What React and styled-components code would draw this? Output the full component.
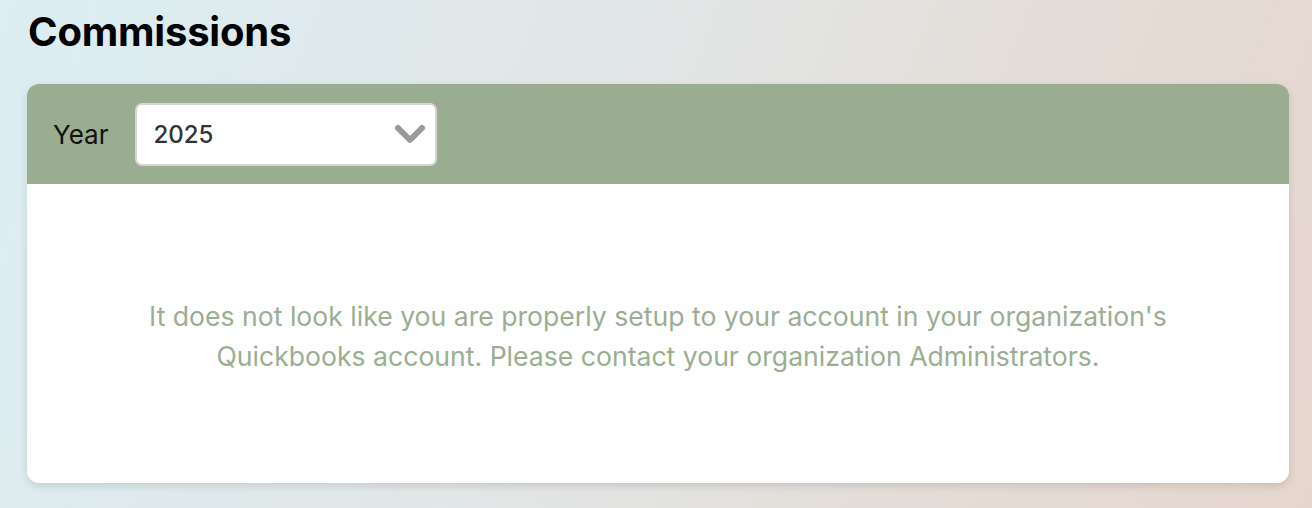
import React, { useState } from 'react';
import styled, { createGlobalStyle } from 'styled-components';

const GlobalStyle = createGlobalStyle`
  html, body {
    margin: 0;
    padding: 0;
    height: 100%;
  }
  body {
    font-family: Inter, "Noto Sans", "Liberation Sans", sans-serif;
    background: linear-gradient(110deg, #dceef3 0%, #e2e6e6 45%, #e4dcd6 75%, #e6d6ce 100%);
    min-height: 508px;
  }
`;

const Page = styled.div`
  padding: 8px 23px 24px 27px;
`;

const Heading = styled.h1`
  margin: 0 0 28px 1px;
  font-size: 40px;
  line-height: 48px;
  font-weight: 700;
  color: #000;
  letter-spacing: -0.2px;
`;

const Card = styled.div`
  background: #fff;
  border-radius: 12px;
  overflow: hidden;
  box-shadow: 0 3px 8px rgba(0, 0, 0, 0.12);
`;

const Toolbar = styled.div`
  display: flex;
  align-items: center;
  gap: 27px;
  height: 100px;
  padding: 0 26px;
  background: #9aad91;
`;

const Label = styled.span`
  font-size: 26px;
  color: #111;
`;

const SelectBox = styled.div`
  position: relative;
  width: 302px;
  height: 63px;
  box-sizing: border-box;
`;

const Select = styled.select`
  appearance: none;
  width: 100%;
  height: 100%;
  box-sizing: border-box;
  border: 2px solid #d4d6db;
  border-radius: 7px;
  background: #fff;
  padding: 0 0 0 16px;
  font-family: inherit;
  font-size: 24px;
  font-weight: 500;
  color: #333;
  outline: none;
`;

const Chevron = styled.svg`
  position: absolute;
  right: 12px;
  top: 50%;
  transform: translateY(-50%);
  pointer-events: none;
`;

const Body = styled.div`
  height: 299px;
  display: flex;
  align-items: center;
  justify-content: center;
  padding: 4px 20px 0;
  box-sizing: border-box;
`;

const Message = styled.p`
  margin: 0;
  max-width: 1100px;
  text-align: center;
  font-size: 26.6px;
  line-height: 40px;
  color: #9aae91;
`;

const App = () => {
  const [year, setYear] = useState('2025');

  return (
    <Page>
      <GlobalStyle />
      <Heading>Commissions</Heading>
      <Card>
        <Toolbar>
          <Label>Year</Label>
          <SelectBox>
            <Select value={year} onChange={(e) => setYear(e.target.value)}>
              <option value="2025">2025</option>
              <option value="2024">2024</option>
              <option value="2023">2023</option>
            </Select>
            <Chevron width="30" height="22" viewBox="0 0 30 22">
              <path d="M3 5 L15 17 L27 5" fill="none" stroke="#999" strokeWidth="6" strokeLinecap="round" strokeLinejoin="round" />
            </Chevron>
          </SelectBox>
        </Toolbar>
        <Body>
          <Message>
            It does not look like you are properly setup to your account in your organization's
            <br />
            Quickbooks account. Please contact your organization Administrators.
          </Message>
        </Body>
      </Card>
    </Page>
  );
};

export default App;
